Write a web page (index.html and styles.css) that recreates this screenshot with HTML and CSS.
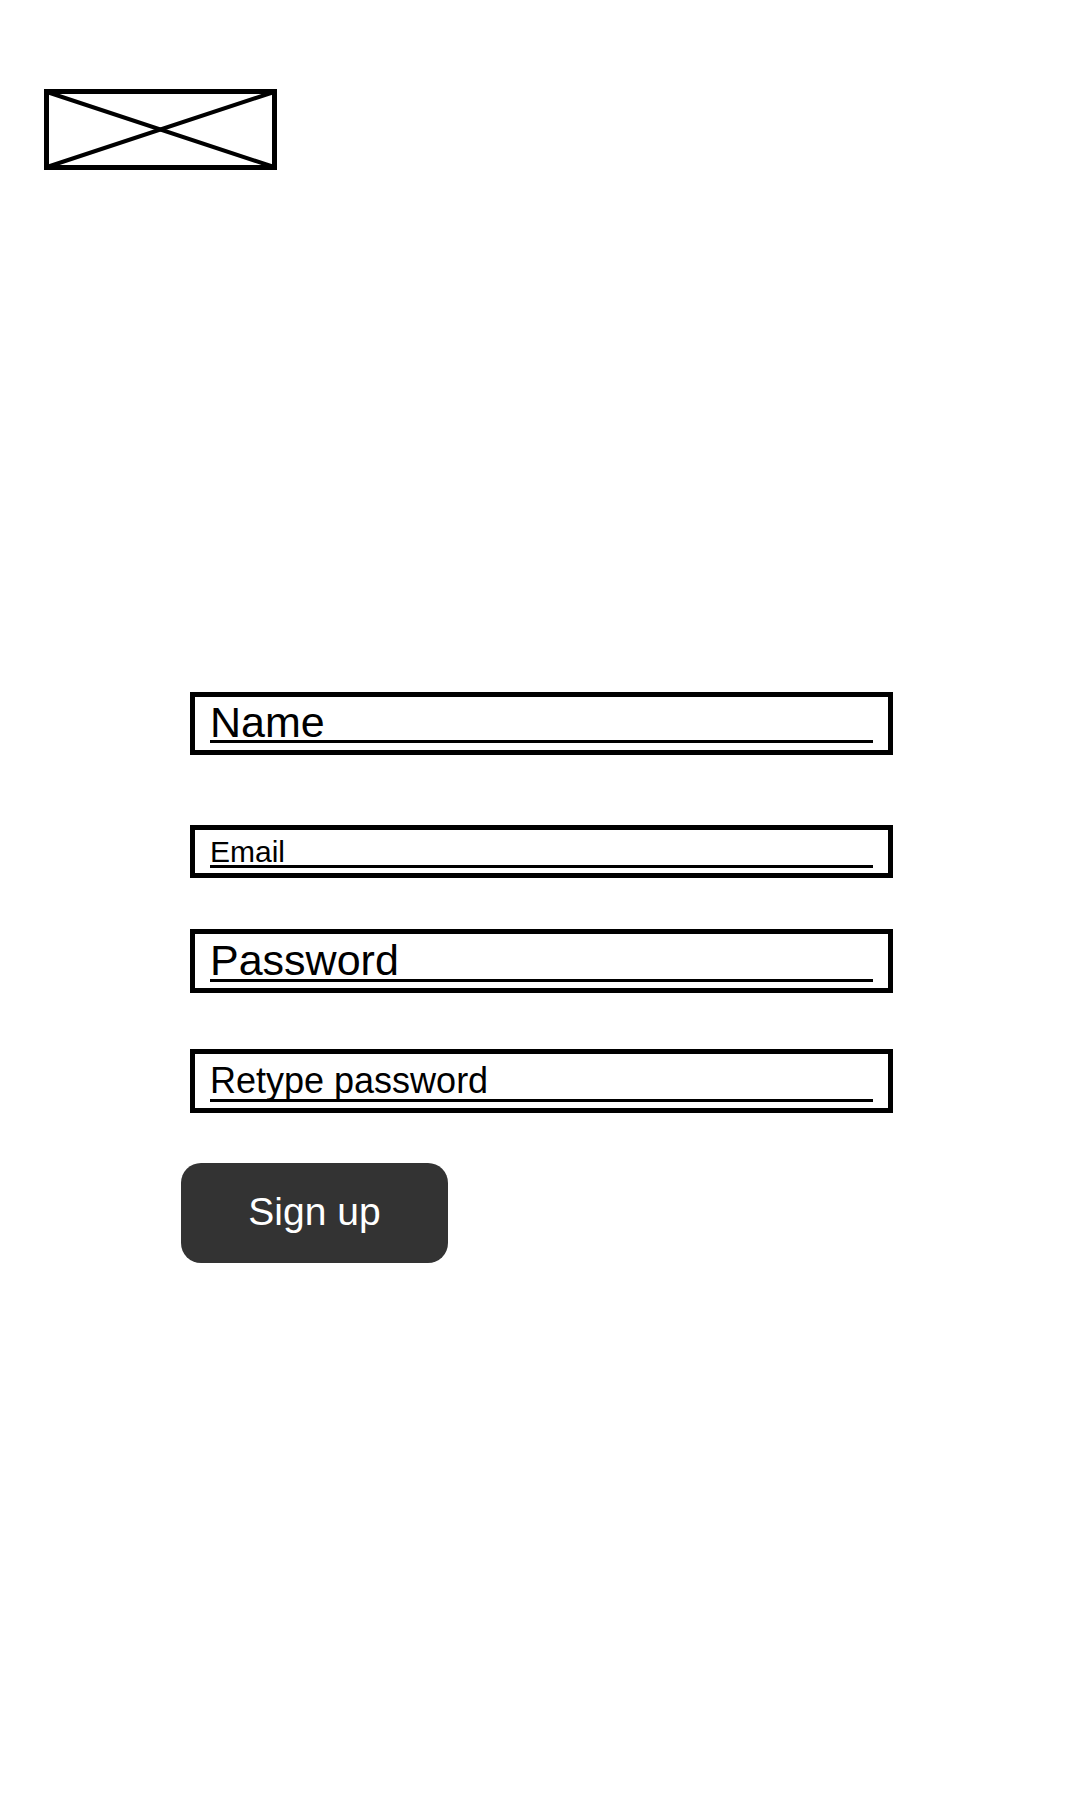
FILE: index.html
```html
<!DOCTYPE html>
<html lang="en">
<head>
<meta charset="utf-8">
<title>Sign up</title>
<link rel="stylesheet" href="styles.css">
</head>
<body>
<div class="page">
  <header class="header">
    <svg class="logo" width="233" height="81" viewBox="0 0 233 81" aria-label="logo placeholder">
      <rect x="2.5" y="2.5" width="228" height="76" fill="none" stroke="#000" stroke-width="5"/>
      <line x1="3" y1="3" x2="230" y2="78" stroke="#000" stroke-width="4" stroke-linecap="round"/>
      <line x1="3" y1="78" x2="230" y2="3" stroke="#000" stroke-width="4" stroke-linecap="round"/>
    </svg>
  </header>
  <form class="signup">
    <div class="field field-name"><span class="label">Name</span></div>
    <div class="field field-email"><span class="label">Email</span></div>
    <div class="field field-password"><span class="label">Password</span></div>
    <div class="field field-retype"><span class="label">Retype password</span></div>
    <button type="button" class="btn">Sign up</button>
  </form>
</div>
</body>
</html>
```
FILE: styles.css
```css
html, body {
  margin: 0;
  padding: 0;
  background: #ffffff;
}

body {
  font-family: "Liberation Sans", Arial, sans-serif;
  color: #000;
}

.page {
  padding: 89px 0 0 44px;
}

.header {
  display: flex;
}

.logo {
  display: block;
}

.signup {
  margin: 522px 0 0 146px;
  width: 703px;
  display: flex;
  flex-direction: column;
  align-items: flex-start;
}

.field {
  box-sizing: border-box;
  width: 703px;
  border: 5px solid #000;
  padding: 7px 15px 6px;
}

.label {
  display: block;
  border-bottom: 3px solid #000;
  white-space: nowrap;
}

.field-name {
  padding-bottom: 7px;
}
.field-name .label {
  font-size: 43px;
  line-height: 36px;
}

.field-email {
  margin-top: 70px;
  padding-top: 8px;
  padding-bottom: 5px;
}
.field-email .label {
  font-size: 30px;
  line-height: 27px;
}

.field-password {
  margin-top: 51px;
}
.field-password .label {
  font-size: 43px;
  line-height: 38px;
}

.field-retype {
  margin-top: 56px;
  padding-top: 8px;
}
.field-retype .label {
  font-size: 36px;
  line-height: 37px;
}

.btn {
  margin: 50px 0 0 -9px;
  width: 267px;
  height: 100px;
  box-sizing: border-box;
  padding: 0 0 3px;
  border: none;
  border-radius: 20px;
  background: #333333;
  color: #ffffff;
  font-family: "Liberation Sans", Arial, sans-serif;
  font-size: 39px;
  line-height: 1;
  display: flex;
  align-items: center;
  justify-content: center;
}
```
